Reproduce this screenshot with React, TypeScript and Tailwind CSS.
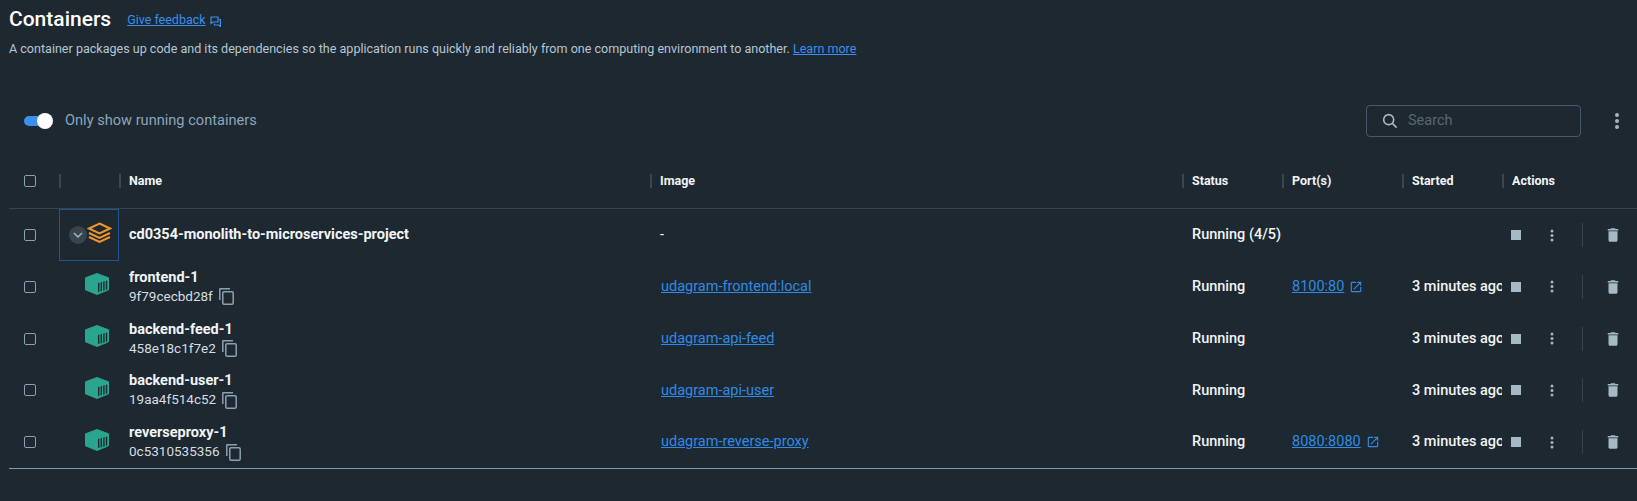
import React from 'react';

const COLS = 'grid grid-cols-[50px_60px_531px_532px_100px_120px_100px_135px]';

const rows = [
  { name: 'frontend-1', id: '9f79cecbd28f', image: 'udagram-frontend:local', port: '8100:80' },
  { name: 'backend-feed-1', id: '458e18c1f7e2', image: 'udagram-api-feed', port: '' },
  { name: 'backend-user-1', id: '19aa4f514c52', image: 'udagram-api-user', port: '' },
  { name: 'reverseproxy-1', id: '0c5310535356', image: 'udagram-reverse-proxy', port: '8080:8080' },
];

function Checkbox() {
  return (
    <div className="flex h-full items-center pl-[15px]">
      <div className="h-[12px] w-[12px] rounded-[2px] border-[1.5px] border-[#8aa0b3]" />
    </div>
  );
}

function HeaderCell({ label }: { label?: string }) {
  return (
    <div className="flex items-center">
      <div className="h-[14px] w-[2px] bg-[#36475a]" />
      <span className="ml-[8px] text-[12.5px] font-bold text-[#f1f4f6]">{label}</span>
    </div>
  );
}

function Kebab() {
  return (
    <svg width="4" height="13" viewBox="0 0 4 13" fill="#a5b6c2">
      <circle cx="2" cy="2" r="1.5" />
      <circle cx="2" cy="6.5" r="1.5" />
      <circle cx="2" cy="11" r="1.5" />
    </svg>
  );
}

function Actions() {
  return (
    <div className="flex h-full items-center pl-[9px]">
      <div className="h-[10px] w-[10px] bg-[#a5b9c6]" />
      <div className="ml-[29px]"><Kebab /></div>
      <div className="ml-[28px] h-[24px] w-px bg-[#37444e]" />
      <svg className="ml-[21px]" width="18" height="18" viewBox="0 0 24 24" fill="#a5b9c6">
        <path d="M6 19c0 1.1.9 2 2 2h8c1.1 0 2-.9 2-2V7H6v12zM19 4h-3.5l-1-1h-5l-1 1H5v2h14V4z" />
      </svg>
    </div>
  );
}

function ContainerIcon() {
  return (
    <svg width="24" height="22" viewBox="0 0 24 22">
      <path d="M12 0.5 L23.5 4.8 V16.8 L12 21.5 L0.5 16.8 V4.8 Z" fill="#2aa58f" stroke="#2aa58f" strokeLinejoin="round" />
      <path d="M13 10l1.4-.3v9l-1.4.4zM15.6 9.3l1.4-.4v9l-1.4.5zM18.2 8.6l1.4-.4v9l-1.4.5zM20.8 7.9l1.4-.4v9l-1.4.5z" fill="#1d2830" />
    </svg>
  );
}

function CopyIcon() {
  return (
    <svg className="ml-[6px] mt-[1px]" width="15" height="17" viewBox="0 0 15 17" fill="none" stroke="#8aa0b3" strokeWidth="1.5">
      <path d="M0.8 12V1.2a.5.5 0 0 1 .5-.5H11" />
      <rect x="3.8" y="3.8" width="10.4" height="12.4" rx="1.2" />
    </svg>
  );
}

function OpenIcon() {
  return (
    <svg className="ml-[5px]" width="14" height="14" viewBox="0 0 24 24" fill="#2e8be6">
      <path d="M19 19H5V5h7V3H5c-1.11 0-2 .9-2 2v14c0 1.1.89 2 2 2h14c1.1 0 2-.9 2-2v-7h-2v7zM14 3v2h3.59l-9.83 9.83 1.41 1.41L19 6.41V10h2V3h-7z" />
    </svg>
  );
}

export default function App() {
  return (
    <div className="h-[501px] w-[1637px] overflow-hidden bg-[#1d2830] text-white font-['Roboto',sans-serif]">
      <div className="flex h-[38px] items-center pl-[9px]">
        <h1 className="text-[21px] font-medium leading-none">Containers</h1>
        <a className="ml-[16px] mt-[3px] text-[12.5px] text-[#3b8fef] underline">Give feedback</a>
        <svg className="ml-[4px] mt-[4px]" width="11" height="11" viewBox="0 0 11 11" fill="none" stroke="#3b8fef" strokeWidth="1.2">
          <path d="M1 1h7v5H3L1 7.5z" />
          <path d="M9 3.5h1.4v7L8.5 9H4.5V7.5" />
        </svg>
      </div>
      <p className="pl-[9px] pt-[3px] text-[12.55px] leading-[16px] text-[#b5c6d4]">
        A container packages up code and its dependencies so the application runs quickly and reliably from one computing environment to another.{' '}
        <a className="text-[#3b8fef] underline">Learn more</a>
      </p>

      <div className="mt-[48px] flex h-[31px] items-center">
        <div className="relative ml-[24px] h-[10px] w-[24px] rounded-full bg-[#3b8fef]">
          <div className="absolute left-[13px] top-[-3px] h-[16px] w-[16px] rounded-full bg-white" />
        </div>
        <span className="ml-[17px] text-[14.6px] text-[#8ba6bc]">Only show running containers</span>
        <div className="ml-auto flex h-[32px] w-[215px] items-center rounded-[4px] border border-[#465a6c] pl-[15px]">
          <svg width="16" height="16" viewBox="0 0 24 24" fill="none" stroke="#a5b9c6" strokeWidth="2.4">
            <circle cx="10" cy="10" r="7.5" />
            <path d="M15.5 15.5 22 22" />
          </svg>
          <span className="ml-[10px] mt-[1px] text-[14.5px] text-[#566875]">Search</span>
        </div>
        <svg className="ml-[34px] mr-[18px]" width="4" height="16" viewBox="0 0 4 16" fill="#a5b6c2">
          <circle cx="2" cy="2" r="2" />
          <circle cx="2" cy="8" r="2" />
          <circle cx="2" cy="14" r="2" />
        </svg>
      </div>

      <div className="ml-[9px] mt-[30px]">
        <div className={`${COLS} h-[43px] border-b border-[#37444e] pb-[12px]`}>
          <Checkbox />
          <HeaderCell />
          <HeaderCell label="Name" />
          <HeaderCell label="Image" />
          <HeaderCell label="Status" />
          <HeaderCell label="Port(s)" />
          <HeaderCell label="Started" />
          <HeaderCell label="Actions" />
        </div>

        <div className={`${COLS} h-[52px] items-center text-[14.5px]`}>
          <Checkbox />
          <div className="flex h-[52px] items-center border border-[#22558a] pl-[9px]">
            <div className="flex h-[18px] w-[18px] items-center justify-center rounded-full bg-[#38444e]">
              <svg width="10" height="6" viewBox="0 0 10 6" fill="none" stroke="#a5b9c6" strokeWidth="1.4">
                <path d="M1 1l4 4 4-4" />
              </svg>
            </div>
            <svg className="mb-[5px]" width="25" height="22" viewBox="0 0 25 22" fill="none" stroke="#f0952b" strokeWidth="2">
              <path d="M12.5 1.5 23 6.5 12.5 11.5 2 6.5Z" />
              <path d="M2 11 12.5 16 23 11" />
              <path d="M2 15 12.5 20 23 15" />
            </svg>
          </div>
          <div className="pl-[10px] font-bold text-[#f1f4f6]">cd0354-monolith-to-microservices-project</div>
          <div className="pl-[10px] text-[#f1f4f6]">-</div>
          <div className="col-span-3 pl-[10px] font-medium text-[#f1f4f6]">Running (4/5)</div>
          <Actions />
        </div>

        <div className="border-b border-[#7a9db5]">
          {rows.map((row) => (
            <div key={row.id} className={`${COLS} h-[51.75px] items-center text-[14.5px]`}>
              <Checkbox />
              <div className="flex justify-end pb-[5px] pr-[10px]"><ContainerIcon /></div>
              <div className="pl-[10px] pt-[1px]">
                <div className="text-[14.5px] font-bold leading-[18px] text-[#f1f4f6]">{row.name}</div>
                <div className="flex items-center text-[13.5px] leading-[19px] text-[#d5dde3]">
                  {row.id}
                  <CopyIcon />
                </div>
              </div>
              <div className="pl-[11px]"><a className="text-[#2e8be6] underline">{row.image}</a></div>
              <div className="pl-[10px] font-medium text-[#f1f4f6]">Running</div>
              <div className="flex items-center pl-[10px]">
                {row.port && <a className="text-[#2e8be6] underline">{row.port}</a>}
                {row.port && <OpenIcon />}
              </div>
              <div className="overflow-hidden whitespace-nowrap pl-[10px] font-medium text-[#f1f4f6]">3 minutes ago</div>
              <Actions />
            </div>
          ))}
        </div>
      </div>
    </div>
  );
}
